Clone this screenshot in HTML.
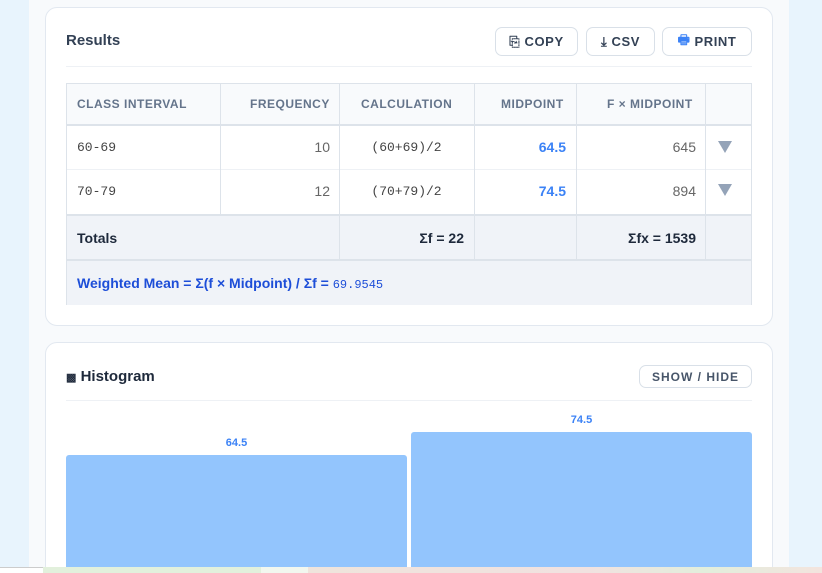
<!DOCTYPE html>
<html style="width:822px;height:573px;overflow:hidden"><head><style>
*{box-sizing:border-box;margin:0;padding:0}
body{width:822px;height:573px;overflow:hidden;background:#e8f4fd;font-family:"Liberation Sans",sans-serif;position:relative}
.col{position:absolute;left:29px;top:0;width:760px;height:573px;background:#f8fafc}
.card{position:absolute;left:45px;width:728px;background:#fff;border:1px solid #e2e8f0;border-radius:12px}
.btn{position:absolute;border:1px solid #d9e0e8;border-radius:7px;background:#fff;font-size:13px;font-weight:bold;letter-spacing:.6px;color:#334155;display:flex;align-items:center;justify-content:center;gap:4px}
.abs{position:absolute}
.vl{position:absolute;width:1px;background:#dde3ea}
.hl{position:absolute;height:1px;background:#dde3ea;left:66px;width:686px}
.th{position:absolute;top:97px;font-size:12px;font-weight:bold;letter-spacing:.5px;color:#64748b}
.mono{font-family:"Liberation Mono",monospace;font-size:13px;color:#444}
.n{font-size:14px;color:#666}
.b{font-size:14px;font-weight:bold;color:#3b82f6}
.tri{position:absolute;width:0;height:0;border-left:7px solid transparent;border-right:7px solid transparent;border-top:12px solid #94a3b8}
</style></head><body>
<div class="col"></div>
<div class="card" style="top:7px;height:319px"></div>
<div class="abs" style="left:66px;top:32px;font-size:15px;font-weight:bold;color:#334155">Results</div>
<div class="btn" style="left:495px;top:27px;width:83px;height:29px">⎘ COPY</div>
<div class="btn" style="left:586px;top:27px;width:69px;height:29px">⤓ CSV</div>
<div class="btn" style="left:662px;top:27px;width:90px;height:29px"><span style="color:#3b82f6">🖶</span> PRINT</div>
<div class="abs" style="left:66px;top:66px;width:686px;height:1px;background:#eef1f5"></div>
<div class="abs" style="left:66px;top:83px;width:686px;height:42px;background:#f8fafc;border:1px solid #dde3ea"></div>
<div class="abs" style="left:66px;top:124px;width:686px;height:2px;background:#dde3ea"></div>
<div class="abs" style="left:66px;top:214px;width:686px;height:91px;background:#f0f3f8;border-left:1px solid #dde3ea;border-right:1px solid #dde3ea"></div>
<div class="abs" style="left:66px;top:214px;width:686px;height:2px;background:#dde3ea"></div>
<div class="abs" style="left:66px;top:259px;width:686px;height:2px;background:#dde3ea"></div>
<div class="hl" style="top:169px;background:#eef1f5"></div>
<div class="vl" style="left:66px;top:83px;height:222px"></div>
<div class="vl" style="left:751px;top:83px;height:222px"></div>
<div class="vl" style="left:220px;top:83px;height:131px"></div>
<div class="vl" style="left:339px;top:83px;height:177px"></div>
<div class="vl" style="left:474px;top:83px;height:177px"></div>
<div class="vl" style="left:576px;top:83px;height:177px"></div>
<div class="vl" style="left:705px;top:83px;height:177px"></div>
<div class="th" style="left:77px">CLASS INTERVAL</div>
<div class="th" style="left:250px">FREQUENCY</div>
<div class="th" style="left:361px">CALCULATION</div>
<div class="th" style="left:501px">MIDPOINT</div>
<div class="th" style="left:607px">F × MIDPOINT</div>
<div class="abs mono" style="left:77px;top:140px">60-69</div>
<div class="abs n" style="left:220px;width:110px;text-align:right;top:139px">10</div>
<div class="abs mono" style="left:339px;width:135px;text-align:center;top:140px">(60+69)/2</div>
<div class="abs b" style="left:476px;width:90px;text-align:right;top:139px">64.5</div>
<div class="abs n" style="left:576px;width:120px;text-align:right;top:139px">645</div>
<div class="tri" style="left:718px;top:141px"></div>
<div class="abs mono" style="left:77px;top:184px">70-79</div>
<div class="abs n" style="left:220px;width:110px;text-align:right;top:183px">12</div>
<div class="abs mono" style="left:339px;width:135px;text-align:center;top:184px">(70+79)/2</div>
<div class="abs b" style="left:476px;width:90px;text-align:right;top:183px">74.5</div>
<div class="abs n" style="left:576px;width:120px;text-align:right;top:183px">894</div>
<div class="tri" style="left:718px;top:184px"></div>
<div class="abs" style="left:77px;top:230px;font-size:14px;font-weight:bold;color:#1e293b">Totals</div>
<div class="abs" style="left:339px;width:125px;text-align:right;top:230px;font-size:14px;font-weight:bold;color:#1e293b">Σf = 22</div>
<div class="abs" style="left:576px;width:120px;text-align:right;top:230px;font-size:14px;font-weight:bold;color:#1e293b">Σfx = 1539</div>
<div class="abs" style="left:77px;top:275px;font-size:14px;font-weight:bold;color:#1d4ed8">Weighted Mean = Σ(f × Midpoint) / Σf = <span style="font-family:'Liberation Mono',monospace;font-size:12px;font-weight:normal">69.9545</span></div>
<div class="card" style="top:342px;height:240px;border-bottom-left-radius:0;border-bottom-right-radius:0"></div>
<div class="abs" style="left:66px;top:368px;font-size:15px;font-weight:bold;color:#1e293b"><span style="font-size:11px">▩</span> Histogram</div>
<div class="btn" style="left:639px;top:365px;width:113px;height:23px;font-size:12px;letter-spacing:1px;color:#475569">SHOW / HIDE</div>
<div class="abs" style="left:66px;top:400px;width:686px;height:1px;background:#eef1f5"></div>
<div class="abs" style="left:66px;top:437px;width:341px;text-align:center;font-size:11px;font-weight:bold;color:#3b82f6">64.5</div>
<div class="abs" style="left:411px;top:414px;width:341px;text-align:center;font-size:11px;font-weight:bold;color:#3b82f6">74.5</div>
<div class="abs" style="left:66px;top:455px;width:341px;height:118px;background:#93c5fd;border-radius:3px 3px 0 0"></div>
<div class="abs" style="left:411px;top:432px;width:341px;height:141px;background:#93c5fd;border-radius:3px 3px 0 0"></div>
<div class="abs" style="left:0;top:567px;width:43px;height:6px;background:#fff;border-top:1px solid #ccc"></div>
<div class="abs" style="left:43px;top:567px;width:779px;height:6px;background:linear-gradient(90deg,#e2f0dc 0%,#e2f0dc 28%,#f2f7ef 28%,#f2f7ef 34%,#efe4dc 34%,#f1e2e0 70%,#e2eedc 85%,#f3e4de 100%)"></div>
</body></html>
